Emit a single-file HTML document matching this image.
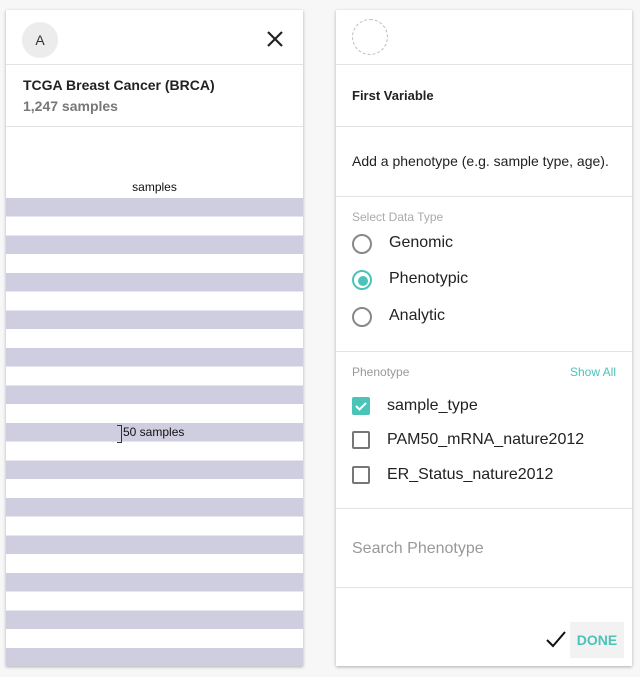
<!DOCTYPE html>
<html><head><style>
body{margin:0;width:640px;height:677px;background:#f7f7f7;font-family:"Liberation Sans",Arial,sans-serif;position:relative;overflow:hidden}
.card{position:absolute;background:#fff;box-shadow:0 1px 3px rgba(0,0,0,.3)}
.a{position:absolute}
.hr{position:absolute;left:0;right:0;height:1px;background:#e3e3e3}
.radio{position:absolute;width:16px;height:16px;border:2px solid #888;border-radius:50%}
.cb{position:absolute;width:14px;height:14px;border:2px solid #777;border-radius:2px}
.lbl{position:absolute;font-size:16px;color:#222}
</style></head><body>
<div class="card" style="left:6px;top:10px;width:297px;height:656px">
  <div class="a" style="left:16px;top:12px;width:36px;height:36px;border-radius:50%;background:#ececec;text-align:center;line-height:36px;font-size:14px;color:#333">A</div>
  <svg class="a" style="left:258px;top:18px" width="22" height="22" viewBox="0 0 22 22"><path d="M4 4L18 18M18 4L4 18" stroke="#222" stroke-width="2.2"/></svg>
  <div class="hr" style="top:54px"></div>
  <div class="a" style="left:17px;top:67px;font-size:14px;font-weight:bold;color:#222">TCGA Breast Cancer (BRCA)</div>
  <div class="a" style="left:17px;top:88px;font-size:14px;font-weight:bold;color:#777">1,247 samples</div>
  <div class="hr" style="top:116px"></div>
  <div class="a" style="left:0;right:0;top:170px;text-align:center;font-size:12px;color:#111">samples</div>
  <div class="a" style="left:0;right:0;top:188px;height:468px;background:repeating-linear-gradient(#cfcde0 0,#cfcde0 18.5px,#fff 18.5px,#fff 37.5px)"></div>
  <div class="a" style="left:111px;top:415px;width:4px;height:16px;border:1px solid #333;border-left:none"></div>
  <div class="a" style="left:117px;top:415px;font-size:12px;color:#111">50 samples</div>
</div>
<div class="card" style="left:336px;top:10px;width:296px;height:656px">
  <div class="a" style="left:16px;top:9px;width:34px;height:34px;border-radius:50%;border:1px dashed #bbb"></div>
  <div class="hr" style="top:54px"></div>
  <div class="a" style="left:16px;top:78px;font-size:13px;font-weight:bold;color:#222">First Variable</div>
  <div class="hr" style="top:116px"></div>
  <div class="a" style="left:16px;top:143px;font-size:14px;color:#222">Add a phenotype (e.g. sample type, age).</div>
  <div class="hr" style="top:186px"></div>
  <div class="a" style="left:16px;top:200px;font-size:12px;color:#aaa">Select Data Type</div>
  <div class="radio" style="left:16px;top:224px"></div><div class="lbl" style="left:53px;top:224px">Genomic</div>
  <div class="radio" style="left:16px;top:260px;border-color:#4cc3b9"></div><div class="a" style="left:22px;top:266px;width:10px;height:10px;border-radius:50%;background:#4cc3b9"></div><div class="lbl" style="left:53px;top:260px">Phenotypic</div>
  <div class="radio" style="left:16px;top:297px"></div><div class="lbl" style="left:53px;top:297px">Analytic</div>
  <div class="hr" style="top:341px"></div>
  <div class="a" style="left:16px;top:355px;font-size:12px;color:#999">Phenotype</div>
  <div class="a" style="right:16px;top:355px;font-size:12px;color:#4cc3b9">Show All</div>
  <div class="a" style="left:16px;top:387px;width:18px;height:18px;background:#4cc3b9;border-radius:2px"></div>
  <svg class="a" style="left:16px;top:387px" width="18" height="18"><path d="M4 9l3.5 3.5L14 6" stroke="#fff" stroke-width="2" fill="none"/></svg>
  <div class="lbl" style="left:51px;top:387px">sample_type</div>
  <div class="cb" style="left:16px;top:421px"></div><div class="lbl" style="left:51px;top:421px">PAM50_mRNA_nature2012</div>
  <div class="cb" style="left:16px;top:456px"></div><div class="lbl" style="left:51px;top:456px">ER_Status_nature2012</div>
  <div class="hr" style="top:498px"></div>
  <div class="a" style="left:16px;top:530px;font-size:16px;color:#999">Search Phenotype</div>
  <div class="hr" style="top:577px"></div>
  <svg class="a" style="left:209px;top:619px" width="22" height="20"><path d="M2 11l6 6L20 3" stroke="#111" stroke-width="2" fill="none"/></svg>
  <div class="a" style="left:234px;top:612px;width:54px;height:36px;background:#f2f2f2;text-align:center;line-height:36px;font-size:14px;font-weight:bold;color:#4cc3b9">DONE</div>
</div>
</body></html>
